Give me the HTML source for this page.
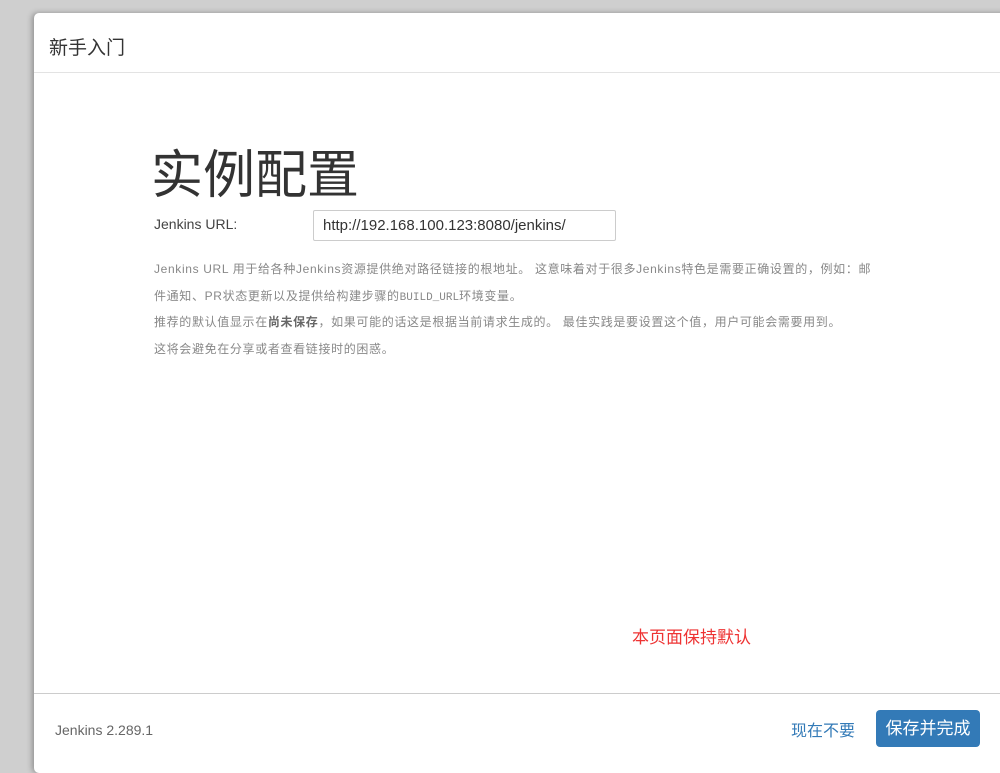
<!DOCTYPE html>
<html><head><meta charset="utf-8"><style>
html,body{margin:0;padding:0;width:1000px;height:753px;overflow:hidden;background:#cfcfcf;font-family:"Liberation Sans","Noto Sans CJK SC",sans-serif;}
.win{position:absolute;left:34px;top:13px;width:1000px;height:760px;background:#fff;border-radius:5px;box-shadow:-2px 0 6px rgba(0,0,0,.3);}
.hdr{position:absolute;left:0;top:0;right:0;height:59px;border-bottom:1px solid #e3e3e3;}
.hdr span{position:absolute;left:15px;top:20px;font-size:19px;color:#333;}
h1{position:absolute;left:117px;top:131px;margin:0;font-size:52px;font-weight:normal;color:#333;line-height:64px;}
.lbl{position:absolute;left:120px;top:203px;font-size:14px;color:#444;}
.inp{position:absolute;left:279px;top:197px;width:303px;height:31px;border:1px solid #ccc;border-radius:2px;box-sizing:border-box;font-size:15px;color:#333;padding:7px 9px;line-height:16px;}
.desc{position:absolute;left:120px;top:243px;white-space:nowrap;font-size:12px;color:#888;line-height:26.5px;letter-spacing:0.65px;}
.desc div{height:26.5px;}
.desc b{color:#666;}
.mono{font-family:"Liberation Mono",monospace;font-size:11px;letter-spacing:0;}
.red{position:absolute;left:598px;top:610px;font-size:17px;color:#e33;}
.ftr{position:absolute;left:0;right:0;top:680px;border-top:1px solid #ccc;}
.ver{position:absolute;left:21px;top:709px;font-size:14px;color:#666;}
.skip{position:absolute;left:757px;top:704px;font-size:16px;color:#337ab7;}
.btn{position:absolute;left:842px;top:697px;width:104px;height:37px;background:#337ab7;border-radius:4px;color:#fff;font-size:17px;text-align:center;line-height:37px;}
</style></head><body>
<div class="win">
<div class="hdr"><span>新手入门</span></div>
<h1>实例配置</h1>
<div class="lbl">Jenkins URL:</div>
<div class="inp">http://192.168.100.123:8080/jenkins/</div>
<div class="desc"><div>Jenkins URL 用于给各种Jenkins资源提供绝对路径链接的根地址。 这意味着对于很多Jenkins特色是需要正确设置的，例如：邮</div><div>件通知、PR状态更新以及提供给构建步骤的<span class="mono">BUILD_URL</span>环境变量。</div><div>推荐的默认值显示在<b>尚未保存</b>，如果可能的话这是根据当前请求生成的。 最佳实践是要设置这个值，用户可能会需要用到。</div><div>这将会避免在分享或者查看链接时的困惑。</div></div>
<div class="red">本页面保持默认</div>
<div class="ftr"></div>
<div class="ver">Jenkins 2.289.1</div>
<div class="skip">现在不要</div>
<div class="btn">保存并完成</div>
</div>
</body></html>
